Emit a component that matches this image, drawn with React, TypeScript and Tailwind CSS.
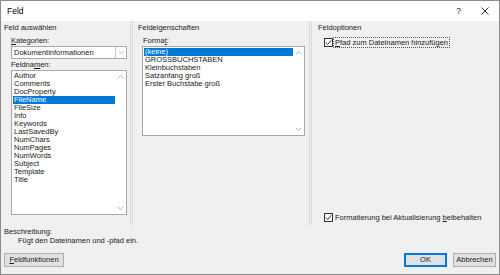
import React from "react";

const font = "font-['Liberation_Sans','Noto_Sans',sans-serif]";

const feldnamen = [
  "Author",
  "Comments",
  "DocProperty",
  "FileName",
  "FileSize",
  "Info",
  "Keywords",
  "LastSavedBy",
  "NumChars",
  "NumPages",
  "NumWords",
  "Subject",
  "Template",
  "Title",
];

const formate = ["(keine)", "GROSSBUCHSTABEN", "Kleinbuchstaben", "Satzanfang groß", "Erster Buchstabe groß"];

const Chevron = ({ up }: { up?: boolean }) => (
  <svg width="7" height="5" viewBox="0 0 7 5">
    <path d={up ? "M1 4 L3.5 1.5 L6 4" : "M1 1 L3.5 3.5 L6 1"} fill="none" stroke="#b4b4b4" strokeWidth="1" />
  </svg>
);

const ListBox = ({ items, selected, className }: { items: string[]; selected: string; className: string }) => (
  <div className={`flex border border-[#a8a8a8] bg-white ${className}`}>
    <div className="flex flex-1 flex-col pt-[1px] pl-[1px]">
      {items.map((item) => (
        <div
          key={item}
          className={
            item === selected
              ? "h-[8px] overflow-hidden bg-[#0078d7] pl-[1px] leading-[8px] text-white"
              : "h-[8px] overflow-hidden pl-[1px] leading-[8px] text-[#1a1a1a]"
          }
        >
          {item}
        </div>
      ))}
    </div>
    <div className="flex w-[11px] flex-col items-center justify-between py-[3px]">
      <Chevron up />
      <Chevron />
    </div>
  </div>
);

const CheckBox = () => (
  <div className="flex h-[9px] w-[9px] items-center justify-center border border-[#333] bg-white">
    <svg width="7" height="7" viewBox="0 0 7 7">
      <path d="M0.8 3.6 L2.7 5.5 L6.3 1.2" fill="none" stroke="#222" strokeWidth="0.9" />
    </svg>
  </div>
);

export default function App() {
  return (
    <div className={`flex h-[275px] w-[500px] flex-col border border-[#8c8c8c] text-[7.5px] text-[#1a1a1a] ${font}`}>
      {/* Title bar */}
      <div className="flex h-[20px] items-center justify-between bg-white pl-[6px]">
        <span className="text-[8.5px] text-black">Feld</span>
        <div className="flex items-center">
          <span className="mr-[20px] text-[8.5px]">?</span>
          <svg className="mr-[10px]" width="8" height="8" viewBox="0 0 8 8">
            <path d="M0.5 0.5 L7.5 7.5 M7.5 0.5 L0.5 7.5" stroke="#222" strokeWidth="0.9" />
          </svg>
        </div>
      </div>

      <div className="flex flex-1 flex-col bg-[#f0f0f0]">
        {/* Panels */}
        <div className="flex h-[204px]">
          {/* Feld auswählen */}
          <div className="flex w-[130px] flex-col border-r border-[#dadada] pl-[3px] pt-[2px]">
            <div className="h-[10px] leading-[10px]">Feld auswählen</div>
            <div className="mt-[3px] pl-[7px] leading-[9px]">
              <span className="underline">K</span>ategorien:
            </div>
            <div className="ml-[7px] mt-[1px] flex h-[13px] w-[116px] items-center border border-[#a8a8a8] bg-white">
              <span className="flex-1 pl-[2px]">Dokumentinformationen</span>
              <div className="flex h-[11px] w-[11px] items-center justify-center border-l border-[#c8c8c8]">
                <Chevron />
              </div>
            </div>
            <div className="mt-[1px] pl-[7px] leading-[9px]">
              Feldna<span className="underline">m</span>en:
            </div>
            <ListBox items={feldnamen} selected="FileName" className="ml-[7px] mt-[1px] h-[145px] w-[116px]" />
          </div>

          {/* Feldeigenschaften */}
          <div className="ml-[1px] flex w-[178px] flex-col border-l border-r border-[#dadada] pl-[5px] pt-[2px]">
            <div className="h-[10px] leading-[10px]">Feldeigenschaften</div>
            <div className="mt-[3px] pl-[5px] leading-[9px]">
              Forma<span className="underline">t</span>:
            </div>
            <ListBox items={formate} selected="(keine)" className="ml-[4px] mt-[1px] h-[90px] w-[163px]" />
          </div>

          {/* Feldoptionen */}
          <div className="ml-[1px] flex flex-1 flex-col border-l border-[#dadada] pl-[6px] pt-[2px]">
            <div className="h-[10px] leading-[10px]">Feldoptionen</div>
            <div className="ml-[6px] mt-[4px] flex items-center">
              <CheckBox />
              <span className="border border-dotted border-[#555] px-[1px] leading-[9px]">
                <span className="underline">P</span>fad zum Dateinamen hinzufügen
              </span>
            </div>
            <div className="mt-auto mb-[3px] ml-[6px] flex items-center">
              <CheckBox />
              <span className="ml-[2px] leading-[9px]">
                Formatierung bei Aktualisierung <span className="underline">b</span>eibehalten
              </span>
            </div>
          </div>
        </div>

        {/* Beschreibung */}
        <div className="mt-[2px] pl-[3px] leading-[9px]">Beschreibung:</div>
        <div className="pl-[17px] leading-[9px]">Fügt den Dateinamen und -pfad ein.</div>

        {/* Buttons */}
        <div className="mt-[8px] flex items-center px-[3px]">
          <button className="h-[14px] w-[60px] border border-[#adadad] bg-[#e1e1e1] leading-[12px]">
            <span className="underline">F</span>eldfunktionen
          </button>
          <div className="flex-1" />
          <button className="h-[14px] w-[43px] border-2 border-[#0078d7] bg-[#e1e1e1] leading-[10px]">OK</button>
          <button className="ml-[6px] h-[14px] w-[43px] border border-[#adadad] bg-[#e1e1e1] leading-[12px]">Abbrechen</button>
        </div>
      </div>
    </div>
  );
}
